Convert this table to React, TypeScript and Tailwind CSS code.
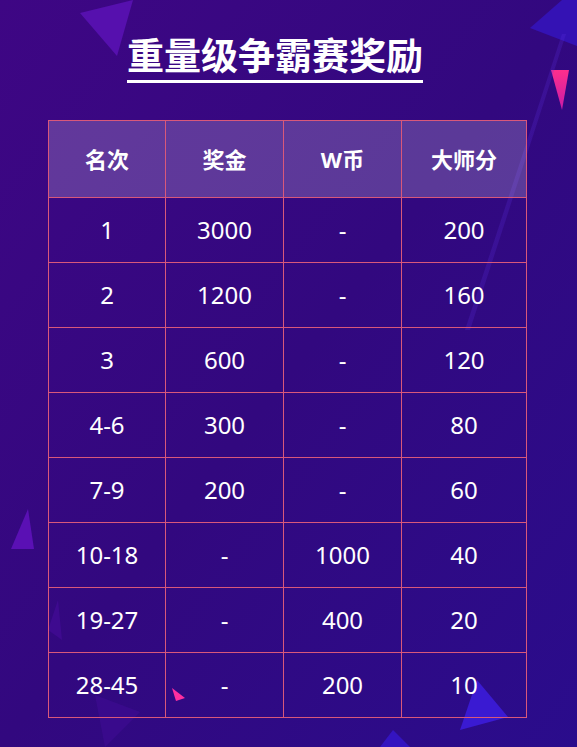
const rows = [
  ["1", "3000", "-", "200"],
  ["2", "1200", "-", "160"],
  ["3", "600", "-", "120"],
  ["4-6", "300", "-", "80"],
  ["7-9", "200", "-", "60"],
  ["10-18", "-", "1000", "40"],
  ["19-27", "-", "400", "20"],
  ["28-45", "-", "200", "10"],
];

const headers = ["名次", "奖金", "W币", "大师分"];

function Decor() {
  return (
    <svg className="absolute inset-0 pointer-events-none" width="577" height="747" viewBox="0 0 577 747">
      <defs>
        <linearGradient id="pink" x1="0" y1="0" x2="0" y2="1">
          <stop offset="0" stopColor="#ff2f8c" />
          <stop offset="1" stopColor="#c81aa8" />
        </linearGradient>
        <linearGradient id="streak" x1="0" y1="0" x2="1" y2="1">
          <stop offset="0" stopColor="#5b2ee0" stopOpacity="0.45" />
          <stop offset="1" stopColor="#5b2ee0" stopOpacity="0" />
        </linearGradient>
      </defs>
      <polygon points="80,13 133,0 117,56" fill="#5610ae" />
      <polygon points="530,28 562,0 577,0 577,46" fill="#3412b4" />
      <polygon points="551,70 569,70 562,110" fill="url(#pink)" />
      <polygon points="562,34 566,34 470,330 465,330" fill="url(#streak)" />
      <polygon points="28,509 34,549 11,549" fill="#5a10b4" />
      <polygon points="58,600 62,640 48,630" fill="#4a0ca0" opacity="0.5" />
      <polygon points="477,680 508,717 460,730" fill="#3a1ad2" />
      <polygon points="393,730 410,747 380,747" fill="#3414c0" />
      <polygon points="95,695 140,712 105,747" fill="#4a0ea0" opacity="0.35" />
      <polygon points="172,688 185,698 176,701" fill="#ff2fa0" />
    </svg>
  );
}

export default function App() {
  return (
    <div
      className="relative w-[577px] h-[747px] overflow-hidden bg-gradient-to-br from-[#3e0684] via-[#32087f] to-[#2a0c8c]"
      style={{ fontFamily: '"Noto Sans", "Noto Sans CJK SC", sans-serif' }}
    >
      <Decor />
      <div className="relative flex flex-col pt-[33px]">
        <div className="flex pl-[127px]">
          <h1 className="text-[37px] leading-[46px] font-bold text-white border-b-[3px] border-white pb-[1px]">
            重量级争霸赛奖励
          </h1>
        </div>
        <div className="ml-[48px] mt-[37px] w-[479px] border border-[#d9587a] text-white">
          <div className="grid grid-cols-[117px_118px_118px_124px] bg-white/20 h-[76px]">
            {headers.map((h, i) => (
              <div
                key={h}
                className={`flex items-center justify-center text-[22px] font-bold ${i < 3 ? "border-r border-[#d9587a]" : ""}`}
              >
                {h}
              </div>
            ))}
          </div>
          {rows.map((r) => (
            <div key={r[0]} className="grid grid-cols-[117px_118px_118px_124px] h-[65px] border-t border-[#d9587a]">
              {r.map((c, i) => (
                <div
                  key={i}
                  className={`flex items-center justify-center text-[24px] ${i < 3 ? "border-r border-[#d9587a]" : ""}`}
                >
                  {c}
                </div>
              ))}
            </div>
          ))}
        </div>
      </div>
    </div>
  );
}
